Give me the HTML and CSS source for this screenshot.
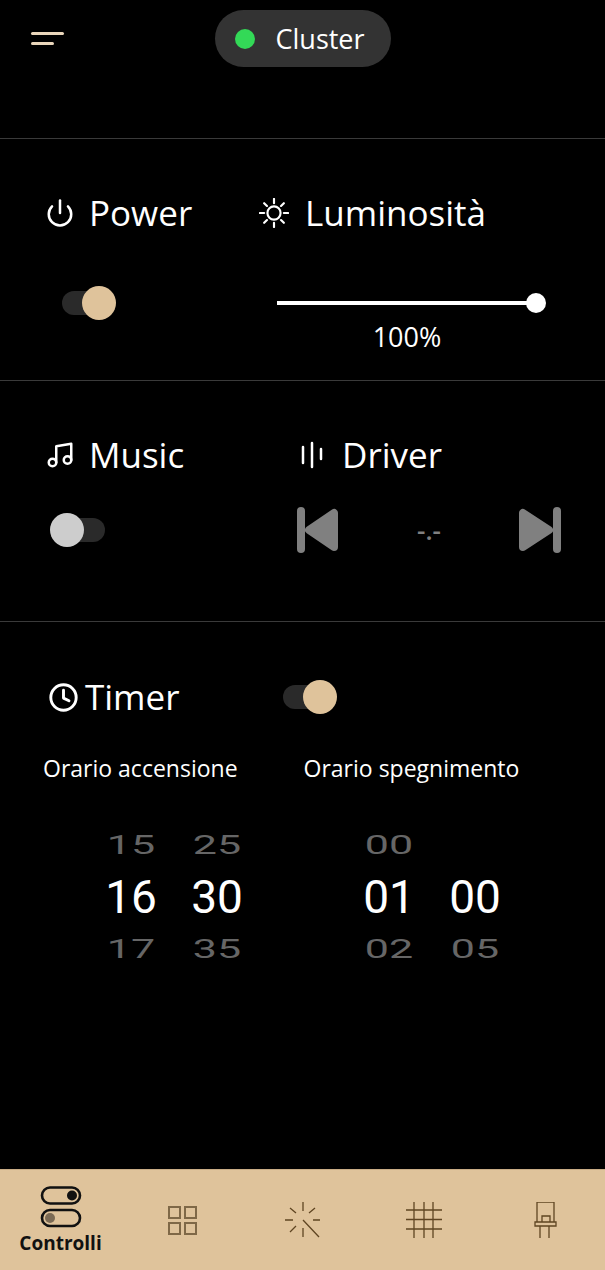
FILE: index.html
```html
<!DOCTYPE html>
<html lang="it">
<head>
<meta charset="UTF-8" />
<meta name="viewport" content="width=device-width, initial-scale=1" />
<title>Controlli</title>
<link rel="stylesheet" href="styles.css">
</head>
<body>

<header class="topbar">
  <button class="menu-btn" aria-label="Menu"><span class="line-long"></span><span class="line-short"></span></button>
  <div class="cluster-pill"><span class="dot"></span>Cluster</div>
</header>

<section class="panel panel-power">
  <div class="col col-power">
    <h2 class="title">
      <svg class="ico ico-power" viewBox="0 0 24 24"><path d="M18.36 6.64a9 9 0 1 1-12.73 0"/><path d="M12 2v10"/></svg>
      Power
    </h2>
    <div class="toggle toggle-on toggle-power"><span class="knob"></span></div>
  </div>
  <div class="col col-light">
    <h2 class="title">
      <svg class="ico ico-sun" viewBox="0 0 32 32">
        <circle cx="16" cy="16" r="7"/>
        <path d="M16 1v4.500M16 26.500V31M1 16h4.500M26.500 16H31M5.500 5.500l3 3M23.500 23.500l3 3M5.500 26.500l3-3M23.500 8.500l3-3"/>
      </svg>
      Luminosità
    </h2>
    <div class="slider"><span class="slider-thumb"></span></div>
    <div class="percent">100%</div>
  </div>
</section>

<section class="panel panel-music">
  <div class="col col-music">
    <h2 class="title">
      <svg class="ico ico-music" viewBox="0 0 24 24"><path d="M9 18V5l12-2v13"/><circle cx="6" cy="18" r="3"/><circle cx="18" cy="16" r="3"/></svg>
      Music
    </h2>
    <div class="toggle toggle-off toggle-music"><span class="knob"></span></div>
  </div>
  <div class="col col-driver">
    <h2 class="title">
      <svg class="ico ico-bars" viewBox="0 0 24 28"><path d="M3 6v16M12 2v24M21 8v10"/></svg>
      Driver
    </h2>
    <div class="driver-controls">
      <svg class="skip" viewBox="0 0 42 46"><rect x="0" y="0" width="8" height="46" rx="4"/><path d="M37 6v34L12 23z"/></svg>
      <span class="driver-value">-.-</span>
      <svg class="skip" viewBox="0 0 42 46"><rect x="34" y="0" width="8" height="46" rx="4"/><path d="M4 6v34l26-17z"/></svg>
    </div>
  </div>
</section>

<section class="panel panel-timer">
  <div class="timer-head">
    <h2 class="title title-timer">
      <svg class="ico ico-clock" viewBox="0 0 24 24"><circle cx="12" cy="12" r="10.500"/><path d="M12 6v6.500l4.500 2.200"/></svg>
      Timer
    </h2>
    <div class="toggle toggle-on"><span class="knob"></span></div>
  </div>
  <div class="timer-labels">
    <span>Orario accensione</span>
    <span class="label-off">Orario spegnimento</span>
  </div>
  <div class="pickers">
    <div class="picker">
      <span class="faded">15</span><span class="faded">25</span>
      <span class="current">16</span><span class="current">30</span>
      <span class="faded">17</span><span class="faded">35</span>
    </div>
    <div class="picker">
      <span class="faded">00</span><span class="faded"></span>
      <span class="current">01</span><span class="current">00</span>
      <span class="faded">02</span><span class="faded">05</span>
    </div>
  </div>
</section>

<nav class="tabbar">
  <div class="tab tab-active">
    <svg class="tab-toggles" viewBox="0 0 42 42">
      <rect x="2" y="1.500" width="38" height="16" rx="8"/>
      <circle class="fill-dark" cx="32" cy="9.500" r="5"/>
      <rect x="2" y="24" width="38" height="16" rx="8"/>
      <circle class="fill-muted" cx="10" cy="32" r="5"/>
    </svg>
    <span>Controlli</span>
  </div>
  <div class="tab">
    <svg class="tab-ico ico-grid" viewBox="0 0 36 36">
      <rect x="5" y="5" width="11" height="11"/><rect x="21" y="5" width="11" height="11"/>
      <rect x="5" y="21" width="11" height="11"/><rect x="21" y="21" width="11" height="11"/>
    </svg>
  </div>
  <div class="tab">
    <svg class="tab-ico" viewBox="0 0 36 36">
      <path d="M18 0v9M18 26v9M0 18h8M28 18h7M5 6l6 5M30 6l-6 5M5 30l6-6M18 18l16 17"/>
    </svg>
  </div>
  <div class="tab">
    <svg class="tab-ico" viewBox="0 0 36 36">
      <path d="M8 0v36M18 0v36M27 0v36M0 8h36M0 17.500h36M0 27h36"/>
    </svg>
  </div>
  <div class="tab">
    <svg class="tab-ico" viewBox="0 0 36 36">
      <path d="M10 20V0h17v20M15 20v-6h8v6M8 20h21v4H8zM13 24v12M22 24v12"/>
    </svg>
  </div>
</nav>

</body>
</html>
```

FILE: styles.css
```css
* {
  box-sizing: border-box;
}
html, body {
  margin: 0;
  padding: 0;
}
body {
  width: 605px;
  height: 1270px;
  background: #000;
  color: #fff;
  font-family: "Open Sans", sans-serif;
  display: flex;
  flex-direction: column;
  overflow: hidden;
}

/* top bar */
.topbar {
  height: 138px;
  padding-top: 10px;
  display: flex;
  justify-content: center;
  align-items: flex-start;
  position: relative;
}
.menu-btn {
  position: absolute;
  left: 31px;
  top: 32px;
  width: 33px;
  padding: 0;
  background: none;
  border: none;
  display: flex;
  flex-direction: column;
  gap: 7px;
}
.menu-btn span {
  display: block;
  height: 3px;
  border-radius: 2px;
  background: #ead6bb;
}
.line-long {
  width: 33px;
}
.line-short {
  width: 23px;
}
.cluster-pill {
  width: 176px;
  height: 57px;
  padding-left: 20px;
  border-radius: 29px;
  background: #333;
  display: flex;
  align-items: center;
  gap: 21px;
  font-size: 27px;
}
.dot {
  width: 20px;
  height: 20px;
  border-radius: 50%;
  background: #33d957;
}

/* panels */
.panel {
  border-top: 1px solid #3a3a3a;
}
.panel-power {
  height: 242px;
  padding: 52px 0 0 45px;
  display: flex;
}
.panel-music {
  height: 241px;
  padding: 52px 0 0 45px;
  display: flex;
}
.panel-timer {
  flex: 1;
  padding: 53px 0 0 49px;
}
.col-power {
  width: 214px;
}
.col-music {
  width: 255px;
}
.title {
  margin: 0;
  height: 44px;
  display: flex;
  align-items: center;
  gap: 14px;
  font-size: 35px;
  font-weight: 400;
  line-height: 44px;
}
.ico {
  fill: none;
  stroke: #fff;
  stroke-width: 2;
  stroke-linecap: round;
  stroke-linejoin: round;
  flex-shrink: 0;
}
.ico-power,
.ico-music {
  width: 30px;
  height: 30px;
}
.ico-sun {
  width: 30px;
  height: 30px;
  margin-right: 2px;
  stroke-width: 2.300;
}
.ico-bars {
  width: 24px;
  height: 28px;
  margin-right: 4px;
  stroke-width: 2.500;
}
.ico-clock {
  width: 29px;
  height: 29px;
  stroke-width: 2.400;
}

/* toggles */
.toggle {
  position: relative;
  width: 43px;
  height: 24px;
  border-radius: 12px;
  background: #2a2a2a;
}
.knob {
  position: absolute;
  top: -5px;
  width: 34px;
  height: 34px;
  border-radius: 50%;
}
.toggle-on .knob {
  right: -11px;
  background: #dfc39b;
}
.toggle-off .knob {
  left: -12px;
  background: #cdcdcd;
}
.toggle-power {
  margin: 56px 0 0 17px;
}
.toggle-music {
  margin: 41px 0 0 17px;
}

/* slider */
.slider {
  position: relative;
  width: 259px;
  height: 4px;
  margin: 66px 0 0 18px;
  background: #fff;
}
.slider-thumb {
  position: absolute;
  right: -10px;
  top: -8px;
  width: 20px;
  height: 20px;
  border-radius: 50%;
  background: #fff;
}
.percent {
  width: 296px;
  margin-top: 16px;
  text-align: center;
  font-size: 27px;
  line-height: 31px;
}

/* driver */
.driver-controls {
  width: 264px;
  margin: 30px 0 0 -3px;
  display: flex;
  justify-content: space-between;
  align-items: center;
}
.skip {
  width: 42px;
  height: 46px;
  fill: #808080;
  stroke: #808080;
  stroke-width: 8;
  stroke-linejoin: round;
}
.skip rect {
  stroke: none;
}
.driver-value {
  color: #808080;
  font-size: 26px;
  font-weight: 600;
  line-height: 46px;
}

/* timer */
.timer-head {
  display: flex;
  align-items: center;
}
.title-timer {
  width: 234px;
  gap: 7px;
}
.timer-labels {
  margin: 34px 0 0 -6px;
  display: flex;
  font-size: 23px;
  line-height: 30px;
}
.label-off {
  margin-left: 66px;
}
.pickers {
  margin: 36px 0 0 39px;
  display: flex;
  gap: 86px;
}
.picker {
  display: grid;
  grid-template-columns: 86px 86px;
  grid-auto-rows: 52px;
  font-family: Roboto, sans-serif;
  text-align: center;
}
.picker span {
  line-height: 52px;
}
.current {
  font-size: 46px;
}
.faded {
  font-size: 43px;
  color: #666;
  transform: scaleY(0.58);
}

/* bottom nav */
.tabbar {
  height: 101px;
  padding-top: 16px;
  border-top: 1px solid #c9ad86;
  background: #dfc39b;
  display: flex;
}
.tab {
  flex: 1;
  display: flex;
  flex-direction: column;
  align-items: center;
}
.tab-active span {
  margin-top: 2px;
  font-size: 19px;
  font-weight: 700;
  line-height: 26px;
  color: #111;
}
.tab-toggles {
  width: 42px;
  height: 42px;
  fill: none;
  stroke: #111;
  stroke-width: 2.600;
}
.tab-toggles .fill-dark {
  fill: #111;
  stroke: none;
}
.tab-toggles .fill-muted {
  fill: #7b6a54;
  stroke: none;
}
.tab-ico {
  width: 36px;
  height: 36px;
  margin-top: 16px;
  fill: none;
  stroke: #5f4522;
  stroke-width: 1.300;
}
.ico-grid {
  stroke: #7f6847;
  stroke-width: 2;
}
```
